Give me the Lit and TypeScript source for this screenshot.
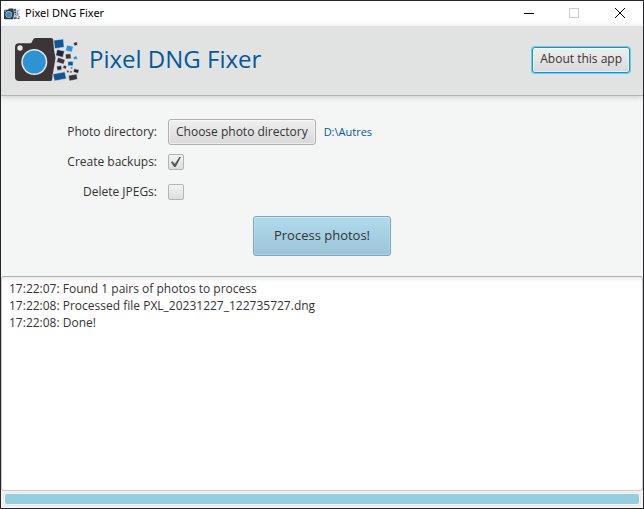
import { LitElement, html, css, svg } from "lit";
import { customElement, state } from "lit/decorators.js";

@customElement("app-logo")
class AppLogo extends LitElement {
  static styles = css`
    :host { display: block; }
    svg { display: block; width: 100%; height: 100%; }
  `;

  render() {
    return html`<svg viewBox="0 0 64 44" aria-hidden="true">${svg`
      <path fill="#3c3537" d="M4 5.300h11q1.500 0 2-1.500l.8-1.800q.8-2 2.700-2h15q3 0 3 3l.5 9 1.500 8-1.500 9-1 6-1 7q0 1-2 1H4q-4 0-4-4V9.300q0-4 4-4z"/>
      <circle cx="5" cy="10" r="2.700" fill="#e8eaea"/>
      <circle cx="19.300" cy="24" r="13" fill="#e8eaea"/>
      <circle cx="19.300" cy="24" r="11.500" fill="#2e93d3"/>
      <g stroke="#e8eaea" stroke-width=".6">
        <path fill="#125699" d="M38.800 2.200l9.600-1.300.8 8.400-9.600 1.400z"/>
        <path fill="#2e93d3" d="M51.800 7l6.600 1.400-1.500 5.900-6.400-1.600z"/>
        <path fill="#3c3537" d="M58.400 4.700l3.600-1 .8 3.300-3.600 1.100z"/>
        <path fill="#1a2940" d="M42.100 11.400l7.400 1.700-1.600 6.300-7.200-1.900z"/>
        <path fill="#3c3537" d="M50.300 16l5.500-.3.4 5-5.500.4z"/>
        <path fill="#2e93d3" d="M58 19l3.600-1.300 1.100 3-3.500 1.300z"/>
        <path fill="#3c3537" d="M43.100 19.300l7.100 2.400-1.600 4.600-7.200-2.300z"/>
        <path fill="#125699" d="M52.900 23.300h5.200v4.500h-5.200z"/>
        <path fill="#1a2940" d="M41.600 28.200l4.700-.7.7 4.300-4.800.6z"/>
        <path fill="#3c3537" d="M48.800 27l3.100 1.200-1.100 3.100-3.200-1.200z"/>
        <path fill="#3c3537" d="M51.400 32.800l2-.8.9 2.100-2.100.9z"/>
        <path fill="#2e93d3" d="M55.300 28.900l2.200-.5.5 2.400-2.200.5z"/>
        <path fill="#1a2940" d="M59.200 30.600l5 1.300-1.100 3.500-5-1.400z"/>
        <path fill="#3c3537" d="M55.400 32.500l1.800.8-.8 2-1.800-.8z"/>
        <path fill="#125699" d="M37.800 36l12-2.200 1.700 6.900-12.100 2.300z"/>
        <path fill="#3c3537" d="M53.400 37.500l8.300-1.600.9 5.400-8.300 1.800z"/>
      </g>
    `}</svg>`;
  }
}

@customElement("app-root")
class AppRoot extends LitElement {
  static styles = css`
    :host {
      display: flex;
      flex-direction: column;
      box-sizing: border-box;
      min-height: 100vh;
      border: 1px solid #26262a;
      background: #f4f6f5;
      color: #333;
      font: 12px/17px "Open Sans", "Noto Sans", sans-serif;
    }
    * { box-sizing: border-box; }
    button, textarea, input { margin: 0; font: inherit; color: inherit; }

    .titlebar {
      display: flex;
      align-items: center;
      height: 25px;
      padding-left: 3px;
      background: #fff;
      color: #000;
    }
    .small-logo { width: 16px; height: 12px; margin-right: 5px; }
    .caption { flex: 1; padding-bottom: 2px; font-family: "Noto Sans", sans-serif; font-size: 11px; }
    .window-button {
      display: grid;
      place-items: center;
      width: 46px;
      height: 25px;
      padding: 0;
      border: 0;
      background: none;
    }
    .window-button svg { width: 10px; height: 11px; overflow: visible; fill: none; stroke: #000; }
    .window-button:disabled svg { stroke: #ccc; }

    .header {
      display: flex;
      align-items: center;
      height: 70px;
      padding: 0 13px 2px 14px;
      background: #e1e3e2;
      border-bottom: 1px solid #b4b6b5;
      box-shadow: 0 1px 6px #0000002e;
    }
    .logo { width: 64px; height: 44px; margin-right: 10px; }
    h1 { flex: 1; margin: 0; padding-bottom: 2px; font-size: 24px; line-height: 32px; font-weight: 400; color: #04599c; }

    .button {
      height: 26px;
      padding: 0 7px 2px;
      border: 1px solid #b1b1b1;
      border-radius: 3px;
      background: linear-gradient(#efefef, #d9d9d9);
      box-shadow: inset 0 0 0 1px #ffffff80;
      white-space: nowrap;
    }
    .focused { border-color: #039ed3; box-shadow: 0 0 0 1px #039ed370, inset 0 0 0 1px #ffffff80; }

    .form {
      display: grid;
      grid-template-columns: 156px 1fr;
      column-gap: 11px;
      row-gap: 4px;
      align-items: center;
      padding: 23px 0 20px;
    }
    .form label { padding-bottom: 2px; text-align: right; }
    .field { display: flex; align-items: center; height: 26px; }
    .path { margin-left: 8px; padding-bottom: 2px; font-size: 11px; color: #04599c; }
    .check {
      appearance: none;
      display: grid;
      place-items: center;
      width: 16px;
      height: 16px;
      border: 1px solid #b4b4b4;
      border-radius: 2px;
      background: linear-gradient(#f3f3f3, #dedede);
    }
    .check:checked::before {
      content: "";
      width: 10px;
      height: 10px;
      background: #555;
      clip-path: polygon(0% 52%, 16% 43%, 38% 70%, 84% 0%, 100% 0%, 46% 100%, 32% 100%);
    }
    .process {
      grid-column: 1 / -1;
      justify-self: center;
      height: 40px;
      margin-top: 7px;
      padding: 0 20px 2px;
      border: 1px solid #7ba6bd;
      border-radius: 3px;
      background: linear-gradient(#b1daec, #9cc4d8);
      box-shadow: inset 0 1px #cdeaf6, inset 0 0 0 1px #ffffff30;
      font-size: 13px;
    }

    .log {
      flex: 1;
      display: block;
      width: 100%;
      min-height: 102px;
      padding: 3px 7px;
      border: 1px solid #c8c8c8;
      border-top-color: #b0b0b0;
      border-radius: 3px;
      outline: 0;
      resize: none;
      background: linear-gradient(#ececec, #fff 5px);
      line-height: 17px;
    }
    .progress {
      height: 17px;
      padding: 2px 3px;
      background: #f4f4f4;
    }
    .track { height: 12px; padding: 1px; border-radius: 3px; background: #e6e6e6; box-shadow: 0 0 0 1px #e9e9e9, inset 0 0 0 1px #f7f7f7; }
    .bar { height: 10px; border-radius: 2px; background: #93cee1; }
  `;

  @state() private directory = "D:\\Autres";
  @state() private progress = 100;
  @state() private log = [
    "17:22:07: Found 1 pairs of photos to process",
    "17:22:08: Processed file PXL_20231227_122735727.dng",
    "17:22:08: Done!",
  ];

  render() {
    return html`
      <div class="titlebar">
        <app-logo class="small-logo"></app-logo>
        <span class="caption">Pixel DNG Fixer</span>
        <button class="window-button" aria-label="Minimize">
          <svg viewBox="0 0 10 11"><path d="M1 5.500h10" /></svg>
        </button>
        <button class="window-button" aria-label="Maximize" disabled>
          <svg viewBox="0 0 10 11"><path d="M.5.5h9v9h-9z" /></svg>
        </button>
        <button class="window-button" aria-label="Close">
          <svg viewBox="0 0 10 11"><path d="M0 0l10 10M10 0L0 10" /></svg>
        </button>
      </div>
      <header class="header">
        <app-logo class="logo"></app-logo>
        <h1>Pixel DNG Fixer</h1>
        <button class="button focused">About this app</button>
      </header>
      <form class="form" @submit=${(e: Event) => e.preventDefault()}>
        <label for="directory">Photo directory:</label>
        <div class="field">
          <button class="button" id="directory" type="button">Choose photo directory</button>
          <span class="path">${this.directory}</span>
        </div>
        <label for="backups">Create backups:</label>
        <div class="field"><input class="check" id="backups" type="checkbox" checked /></div>
        <label for="jpegs">Delete JPEGs:</label>
        <div class="field"><input class="check" id="jpegs" type="checkbox" /></div>
        <button class="process">Process photos!</button>
      </form>
      <textarea class="log" readonly aria-label="Log" .value=${this.log.join("\n")}></textarea>
      <div class="progress">
        <div class="track" role="progressbar" aria-label="Progress" aria-valuenow=${this.progress}>
          <div class="bar" style="width: ${this.progress}%"></div>
        </div>
      </div>
    `;
  }
}
